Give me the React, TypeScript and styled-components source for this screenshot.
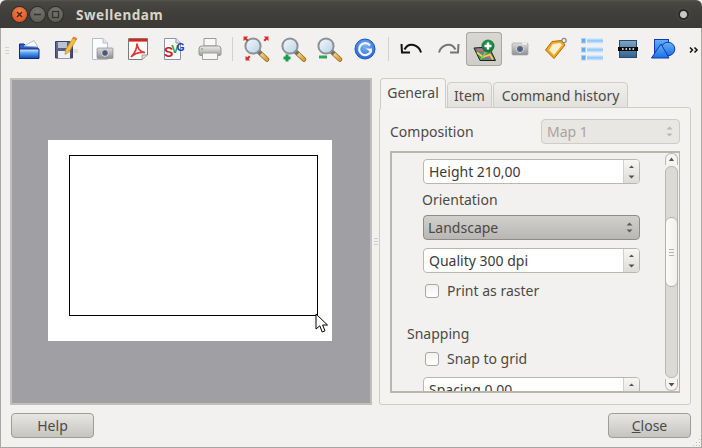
import React from 'react';
import styled, { createGlobalStyle } from 'styled-components';

const GlobalStyle = createGlobalStyle`
  html, body {
    margin: 0;
    padding: 0;
    background: #3c3b37;
  }
  * {
    box-sizing: border-box;
  }
`;

const Window = styled.div`
  position: relative;
  display: flex;
  flex-direction: column;
  width: 702px;
  height: 448px;
  overflow: hidden;
  background: #f2f1ef;
  font-family: 'Noto Sans', sans-serif;
  font-size: 14px;
  color: #4c4a46;
`;

const TitleBar = styled.div`
  display: flex;
  align-items: center;
  flex: none;
  height: 28px;
  padding: 1px 12px 0 12px;
  background: linear-gradient(#565550 0, #484743 2px, #3f3e3a 14px, #3c3b37 100%);
  border-radius: 6px 6px 0 0;
`;

const WindowButton = styled.div<{ $color: string; $dark: string }>`
  display: flex;
  align-items: center;
  justify-content: center;
  width: 15px;
  height: 15px;
  margin-right: 3px;
  border-radius: 50%;
  background: radial-gradient(circle at 50% 30%, ${(p) => p.$color}, ${(p) => p.$dark});
  box-shadow: 0 0 0 1px #2e2d2a;
`;

const TitleText = styled.div`
  margin-left: 10px;
  font-family: 'Noto Sans', sans-serif;
  font-weight: 700;
  font-size: 13.5px;
  letter-spacing: 0.55px;
  color: #d9d4c9;
`;

const TrayDot = styled.div`
  width: 13px;
  height: 13px;
  margin-left: auto;
  border-radius: 50%;
  background: radial-gradient(circle, #c9c8c4 0, #c9c8c4 3px, #2b2a27 4px, #2b2a27 5px, #55544f 6.5px);
`;

const Body = styled.div`
  display: flex;
  flex-direction: column;
  flex: 1;
  min-height: 0;
  border: 1px solid #a9a7a3;
  border-top: none;
`;

const Toolbar = styled.div`
  display: flex;
  align-items: flex-start;
  flex: none;
  height: 50px;
  padding-top: 4px;
`;

const Grip = styled.div`
  flex: none;
  width: 4px;
  height: 7px;
  margin: 15px 0 0 4px;
  background: repeating-linear-gradient(#d4d2cd 0, #d4d2cd 1px, transparent 1px, transparent 3px);
`;

const ToolSlot = styled.div`
  display: flex;
  flex: none;
  width: 36px;
  height: 34px;
`;

const ToggledSlot = styled(ToolSlot)`
  background: linear-gradient(#d9d7d3, #cfcdc9);
  border-radius: 4px;
  box-shadow: inset 0 0 0 1px #a9a7a2;
`;

const ToolSep = styled.div<{ $width: number }>`
  flex: none;
  width: ${(p) => p.$width}px;
  height: 24px;
  margin-top: 5px;
  display: flex;
  justify-content: center;
  &::before {
    content: '';
    width: 1px;
    background: #d3d1cc;
  }
`;

const More = styled.div`
  flex: none;
  width: 19px;
  height: 34px;
`;

const HiddenDefs = styled.svg`
  position: absolute;
`;

const Main = styled.div`
  display: flex;
  flex: 1;
  min-height: 0;
  padding: 0 10px 0 9px;
`;

const Canvas = styled.div`
  flex: none;
  width: 362px;
  height: 327px;
  padding: 60px 0 0 36px;
  background: #a09fa3;
  border: 2px solid #c2bfb8;
`;

const Sheet = styled.div`
  position: relative;
  width: 284px;
  height: 201px;
  padding: 15px 21px;
  background: #fff;
`;

const MapFrame = styled.div`
  width: 249px;
  height: 161px;
  border: 1px solid #000;
`;

const CursorIcon = styled.svg`
  position: absolute;
  left: 267px;
  top: 173px;
`;

const Splitter = styled.div`
  flex: none;
  width: 7px;
  display: flex;
  align-items: flex-start;
  justify-content: center;
  padding-top: 160px;
  &::before {
    content: '';
    width: 4px;
    height: 8px;
    background: repeating-linear-gradient(#cfccc7 0, #cfccc7 1px, transparent 1px, transparent 3px);
  }
`;

const RightPane = styled.div`
  display: flex;
  flex-direction: column;
  flex: none;
  width: 312px;
  height: 327px;
`;

const TabBar = styled.div`
  position: relative;
  z-index: 1;
  display: flex;
  align-items: flex-end;
  height: 30px;
  padding-left: 1px;
  margin-bottom: -1px;
`;

const Tab = styled.div<{ $active?: boolean; $width: number }>`
  display: flex;
  align-items: center;
  justify-content: center;
  width: ${(p) => p.$width}px;
  height: ${(p) => (p.$active ? 30 : 26)}px;
  padding: ${(p) => (p.$active ? '0 0 2px' : '0')};
  margin-right: 1px;
  border: 1px solid #cfccc6;
  border-bottom: ${(p) => (p.$active ? 'none' : '1px solid #cfccc6')};
  border-radius: 4px 4px 0 0;
  background: ${(p) => (p.$active ? '#f5f4f2' : 'linear-gradient(#f0efed, #e3e1dd)')};
  color: #4c4a46;
`;

const TabPanel = styled.div`
  display: flex;
  flex-direction: column;
  flex: 1;
  min-height: 0;
  padding: 11px 10px 11px 10px;
  background: #f4f3f1;
  border: 1px solid #cfccc6;
  border-radius: 3px;
`;

const CompositionRow = styled.div`
  display: flex;
  align-items: center;
  justify-content: space-between;
  flex: none;
  height: 25px;
  margin-bottom: 7px;
`;

const DisabledCombo = styled.div`
  display: flex;
  align-items: center;
  justify-content: space-between;
  width: 139px;
  height: 25px;
  padding: 0 6px 0 5px;
  background: #e9e7e4;
  border: 1px solid #cfccc7;
  border-radius: 4px;
  color: #a6a4a0;
`;

const ScrollArea = styled.div`
  display: flex;
  height: 242px;
  border: 2px solid #b9b6b0;
  background: #f2f1ef;
  border-right-width: 1px;
`;

const ScrollContent = styled.div`
  flex: 1;
  min-width: 0;
  overflow: hidden;
  padding-top: 6px;
`;

const Indented = styled.div<{ $top?: number; $left?: number }>`
  margin-top: ${(p) => p.$top ?? 0}px;
  margin-left: ${(p) => p.$left ?? 31}px;
`;

const SpinBox = styled.div`
  display: flex;
  width: 217px;
  height: 25px;
  background: #fff;
  border: 1px solid #bab7b1;
  border-radius: 4px;
  overflow: hidden;
  color: #3c3b38;
`;

const SpinValue = styled.div`
  flex: 1;
  padding: 1px 0 0 5px;
  line-height: 22px;
`;

const SpinArrows = styled.div`
  flex: none;
  width: 16px;
  background: linear-gradient(#f7f6f5, #dedcd8);
  border-left: 1px solid #d2cfca;
`;

const Combo = styled.div`
  display: flex;
  align-items: center;
  justify-content: space-between;
  width: 217px;
  height: 25px;
  padding: 0 6px 0 4px;
  background: linear-gradient(#d1d0cd, #b9b7b4);
  border: 1px solid #8e8c87;
  border-radius: 4px;
  color: #4a4945;
`;

const CheckRow = styled.div`
  display: flex;
  align-items: center;
  gap: 8px;
  height: 18px;
  padding-left: 2px;
`;

const CheckLabel = styled.span`
  margin-top: -2px;
`;

const CheckBox = styled.div`
  width: 14px;
  height: 14px;
  background: linear-gradient(#f2f1ef, #fff);
  border: 1px solid #aaa7a1;
  border-radius: 3px;
`;

const ScrollBar = styled.div`
  display: flex;
  flex-direction: column;
  align-items: center;
  flex: none;
  width: 16px;
`;

const ScrollStep = styled.div`
  flex: none;
  width: 13px;
  height: 12px;
  background: #f5f4f2;
  border: 1px solid #bcb9b3;
  display: flex;
  align-items: center;
  justify-content: center;
`;

const StepUp = styled(ScrollStep)`
  border-radius: 6px 6px 0 0;
  border-bottom: none;
`;

const StepDown = styled(ScrollStep)`
  border-radius: 0 0 6px 6px;
  border-top: none;
`;

const Trough = styled.div`
  flex: 1;
  width: 13px;
  padding-top: 50px;
  background: #dcdad6;
  border: 1px solid #bcb9b3;
  border-radius: 6px;
  margin: 1px 0;
`;

const Thumb = styled.div`
  display: flex;
  align-items: center;
  justify-content: center;
  width: 13px;
  height: 70px;
  margin-left: -1px;
  background: linear-gradient(90deg, #fbfbfa, #f0efed);
  border: 1px solid #b3b0aa;
  border-radius: 6px;
  &::before {
    content: '';
    width: 5px;
    height: 7px;
    background: repeating-linear-gradient(#b5b2ac 0, #b5b2ac 1px, transparent 1px, transparent 3px);
  }
`;

const Footer = styled.div`
  display: flex;
  justify-content: space-between;
  flex: none;
  height: 41px;
  padding: 7px 10px 0 10px;
`;

const PushButton = styled.div`
  display: flex;
  align-items: center;
  justify-content: center;
  width: 83px;
  height: 25px;
  background: linear-gradient(#e8e6e3, #c6c4c1);
  border: 1px solid #9f9d98;
  border-radius: 4px;
  color: #4c4a46;
`;

const ResizeGrip = styled.svg`
  position: absolute;
  right: 1px;
  bottom: 1px;
`;

const ArrowPair = ({ color = '#5e5c58' }: { color?: string }) => (
  <svg width="7" height="11" viewBox="0 0 7 11">
    <path d="M3.5 0.5L6.5 3.5H0.5Z" fill={color} />
    <path d="M3.5 10.5L6.5 7.5H0.5Z" fill={color} />
  </svg>
);

const SpinField = ({ text }: { text: string }) => (
  <SpinBox>
    <SpinValue>{text}</SpinValue>
    <SpinArrows>
      <svg width="15" height="23" viewBox="0 0 15 23">
        <path d="M7.5 5.5L10 8H5Z" fill="#55534f" />
        <path d="M7.5 18.5L10.5 15.5H4.5Z" fill="#55534f" />
      </svg>
    </SpinArrows>
  </SpinBox>
);

const Icons = () => (
  <HiddenDefs width="0" height="0">
    <defs>
      <linearGradient id="folderFront" x1="0" y1="0" x2="0" y2="1">
        <stop offset="0" stopColor="#e6f2fc" />
        <stop offset="0.4" stopColor="#56a5ea" />
        <stop offset="1" stopColor="#0f45b4" />
      </linearGradient>
      <linearGradient id="floppy" x1="0" y1="0" x2="1" y2="1">
        <stop offset="0" stopColor="#6a7196" />
        <stop offset="1" stopColor="#3f466e" />
      </linearGradient>
      <linearGradient id="greyBody" x1="0" y1="0" x2="0" y2="1">
        <stop offset="0" stopColor="#dcdcda" />
        <stop offset="1" stopColor="#8d8e8f" />
      </linearGradient>
      <linearGradient id="printerBody" x1="0" y1="0" x2="0" y2="1">
        <stop offset="0" stopColor="#eeeeed" />
        <stop offset="1" stopColor="#9c9d9c" />
      </linearGradient>
      <linearGradient id="lens" x1="0" y1="0" x2="1" y2="1">
        <stop offset="0" stopColor="#f6f9fc" />
        <stop offset="1" stopColor="#b9d0e6" />
      </linearGradient>
      <linearGradient id="handle" x1="0" y1="0" x2="1" y2="1">
        <stop offset="0" stopColor="#f7e6a8" />
        <stop offset="1" stopColor="#dc9a2c" />
      </linearGradient>
      <radialGradient id="refreshBall" cx="0.5" cy="0.35" r="0.7">
        <stop offset="0" stopColor="#7fb4f5" />
        <stop offset="1" stopColor="#1f5fd8" />
      </radialGradient>
      <linearGradient id="listBar" x1="0" y1="0" x2="0" y2="1">
        <stop offset="0" stopColor="#e4f1fd" />
        <stop offset="0.5" stopColor="#8cc6f8" />
        <stop offset="1" stopColor="#d6eafc" />
      </linearGradient>
      <linearGradient id="scaleFill" x1="0" y1="0" x2="0" y2="1">
        <stop offset="0" stopColor="#7fa6cb" />
        <stop offset="1" stopColor="#2f618f" />
      </linearGradient>
      <linearGradient id="shapeFill" x1="0" y1="0" x2="0" y2="1">
        <stop offset="0" stopColor="#69b0f7" />
        <stop offset="1" stopColor="#1c6fe6" />
      </linearGradient>
      <radialGradient id="addBall" cx="0.5" cy="0.35" r="0.7">
        <stop offset="0" stopColor="#33a05a" />
        <stop offset="1" stopColor="#0a6b33" />
      </radialGradient>
    </defs>
  </HiddenDefs>
);

const Tool = ({ children }: { children: React.ReactNode }) => (
  <ToolSlot>
    <svg width="36" height="34" viewBox="0 0 36 34">
      {children}
    </svg>
  </ToolSlot>
);

const Magnifier = ({ cx }: { cx: number }) => (
  <>
    <path d={`M${cx + 6} 20L${cx + 14} 27.5`} stroke="#8a6a2a" strokeWidth="4.6" strokeLinecap="round" />
    <path d={`M${cx + 6} 20L${cx + 14} 27.5`} stroke="url(#handle)" strokeWidth="3.2" strokeLinecap="round" />
    <path d={`M${cx + 5.5} 19.5L${cx + 8} 22`} stroke="#6e6e6c" strokeWidth="3.6" />
    <circle cx={cx} cy="14" r="7.6" fill="url(#lens)" stroke="#8b9296" strokeWidth="2" />
  </>
);

const CornerArrow = ({ x, y, r }: { x: number; y: number; r: number }) => (
  <g transform={`translate(${x} ${y}) rotate(${r})`}>
    <path d="M-2.5 -2.5H2L0.8 -0.8L2.6 1L1 2.6L-0.8 0.8L-2.5 2Z" fill="#d8322d" />
  </g>
);

const App = () => (
  <Window>
    <GlobalStyle />
    <Icons />
    <TitleBar>
      <WindowButton $color="#f4824a" $dark="#d8481a">
        <svg width="9" height="9" viewBox="0 0 9 9">
          <path d="M2 2L7 7M7 2L2 7" stroke="#4a2310" strokeWidth="1.4" />
        </svg>
      </WindowButton>
      <WindowButton $color="#767570" $dark="#585752">
        <svg width="9" height="9" viewBox="0 0 9 9">
          <path d="M1 4.5H8" stroke="#34332f" strokeWidth="1.6" />
        </svg>
      </WindowButton>
      <WindowButton $color="#767570" $dark="#585752">
        <svg width="9" height="9" viewBox="0 0 9 9">
          <rect x="1.5" y="1.5" width="6" height="6" fill="none" stroke="#34332f" strokeWidth="1.3" />
        </svg>
      </WindowButton>
      <TitleText>Swellendam</TitleText>
      <TrayDot />
    </TitleBar>
    <Body>
      <Toolbar>
        <Grip />
        <Tool>
          <path d="M10.5 14V26.5H29.5V17L27 14H17L15 12H10.5Z" fill="#2d63c8" stroke="#12238a" />
          <path d="M15 14L25 8.5L29 15Z" fill="#f8fbfe" stroke="#9fb2cc" strokeWidth="0.8" />
          <path d="M10.5 17H30V26.5H10.5Z" fill="url(#folderFront)" stroke="#12238a" />
        </Tool>
        <Tool>
          <path d="M28 17H33V21H28Z" fill="#e2e0dd" />
          <path d="M10.5 9.5H25L27.5 12V26H10.5Z" fill="url(#floppy)" stroke="#3a4066" />
          <rect x="13" y="10" width="9" height="6" fill="#bcc1d4" />
          <rect x="13" y="19" width="12" height="7" fill="#eeeef3" />
          <path d="M32 6.5L24 20L20 22.5L20.5 18L28.5 5Z" fill="#f4bd3c" stroke="#b88616" strokeWidth="0.6" />
          <path d="M28.5 5L32 6.5L31 8.2L27.5 6.6Z" fill="#e87c2b" />
        </Tool>
        <Tool>
          <path d="M11.5 6.5H22L26.5 11V27.5H11.5Z" fill="#fbfcfd" stroke="#b4bccd" />
          <path d="M22 6.5V11H26.5" fill="#e3e7ee" stroke="#b4bccd" />
          <rect x="16" y="16" width="16" height="10.5" rx="1" fill="url(#greyBody)" stroke="#8a8b8c" strokeWidth="0.7" />
          <circle cx="24" cy="21" r="3.4" fill="#4f5a72" stroke="#e4e4e3" />
          <circle cx="24" cy="21" r="1.2" fill="#2a5ea8" />
        </Tool>
        <Tool>
          <path d="M11.5 6.5H30.5V23L25 27.5H11.5Z" fill="#fdfdfc" stroke="#7d7a75" />
          <rect x="12" y="7" width="18" height="2.6" fill="#e0201c" />
          <path d="M25 27.5V23H30.5" fill="#dfdcd8" stroke="#8d8a85" strokeWidth="0.8" />
          <path d="M14 25C18 21 20 16 20 11.5C20 16 23 20 28 20.5C23 20 18 21 14 25Z" fill="none" stroke="#e3362f" strokeWidth="1.7" />
        </Tool>
        <Tool>
          <path d="M11.5 6.5H23L27.5 11V27.5H11.5Z" fill="#fcfdfe" stroke="#8b93a6" />
          <path d="M23 6.5V11H27.5" fill="#e1e5ec" stroke="#8b93a6" />
          <text
            x="11"
            y="25"
            fontFamily="Liberation Sans, sans-serif"
            fontWeight="700"
            letterSpacing="-2"
          >
            <tspan fill="#d01d1d" fontSize="14">S</tspan>
            <tspan fill="#17a52a" fontSize="11" dy="-4">V</tspan>
            <tspan fill="#1638c8" fontSize="10" dy="-2">G</tspan>
          </text>
        </Tool>
        <Tool>
          <path d="M15 6.5H27V14H15Z" fill="#f8f8f7" stroke="#9a9b9a" />
          <path d="M12.5 14H29.5Q32 14 32 17V22Q32 23.5 30 23.5H12Q10 23.5 10 22V17Q10 14 12.5 14Z" fill="url(#printerBody)" stroke="#949593" />
          <path d="M13.5 21H28.5V27.5H13.5Z" fill="#f6f6f5" stroke="#a0a19f" />
          <circle cx="13" cy="17" r="1" fill="#5bd04f" />
        </Tool>
        <ToolSep $width={14} />
        <Tool>
          <Magnifier cx={14} />
          <CornerArrow x={7} y={7} r={0} />
          <CornerArrow x={27} y={7} r={90} />
          <CornerArrow x={9} y={26} r={270} />
        </Tool>
        <Tool>
          <Magnifier cx={15} />
          <path d="M12 22.5V29.5M8.5 26H15.5" stroke="#14a048" strokeWidth="3" />
        </Tool>
        <Tool>
          <Magnifier cx={15} />
          <path d="M8 25H16" stroke="#2da657" strokeWidth="3" />
        </Tool>
        <Tool>
          <circle cx="18" cy="17" r="10" fill="url(#refreshBall)" stroke="#1b56c8" />
          <path d="M23 13.5A6 6 0 1 0 24 18.5" fill="none" stroke="#f2f7fe" strokeWidth="2.2" />
          <path d="M18.5 16.5H25V21Z" fill="#f2f7fe" />
        </Tool>
        <ToolSep $width={11} />
        <Tool>
          <path d="M27 20.5C25 13 15 9 10.5 17.5" fill="none" stroke="#111" strokeWidth="2" />
          <path d="M7.5 12L8 20.5H16" fill="none" stroke="#111" strokeWidth="2" />
        </Tool>
        <Tool>
          <path d="M9 20.5C11 13 21 9 25.5 17.5" fill="none" stroke="#767573" strokeWidth="2" />
          <path d="M28.5 12L28 20.5H20" fill="none" stroke="#767573" strokeWidth="2" />
        </Tool>
        <ToggledSlot>
          <svg width="36" height="34" viewBox="0 0 36 34">
            <path d="M8 16L23 15L29.5 28.5H14Z" fill="#5f8a70" stroke="#1c211b" />
            <path d="M11 17.5L19 18.5L18.5 23L26.5 26.5" fill="none" stroke="#e8559c" strokeWidth="2" />
            <path d="M11 20.5L17 25L24 22.5L27 27.5" fill="none" stroke="#e8dc3a" strokeWidth="1.6" />
            <path d="M15 27L19 21L24 18.5" fill="none" stroke="#6ad05a" strokeWidth="1.4" />
            <circle cx="22" cy="14" r="6.5" fill="url(#addBall)" />
            <path d="M22 10.5V17.5M18.5 14H25.5" stroke="#fff" strokeWidth="2.4" />
          </svg>
        </ToggledSlot>
        <Tool>
          <rect x="10" y="11" width="16" height="12" rx="1" fill="url(#greyBody)" stroke="#a4a5a6" strokeWidth="0.7" />
          <rect x="20" y="10.5" width="5" height="2" fill="#f0f0f0" />
          <circle cx="18" cy="17" r="3.6" fill="#5d6478" stroke="#d8d8d7" />
          <circle cx="18" cy="17" r="1.4" fill="#2a64b0" />
        </Tool>
        <Tool>
          <path d="M7.5 18L16 26.5L27 13L23.5 8.5L14 9.5Z" fill="#f4a81c" stroke="#a9690c" strokeLinejoin="round" />
          <path d="M11 18L16 23L24 13L22 11L15 12Z" fill="#fdf0d2" />
          <circle cx="26" cy="8.5" r="2.2" fill="none" stroke="#8a8984" strokeWidth="1.2" />
        </Tool>
        <Tool>
          {[6, 15, 23].map((y) => (
            <g key={y}>
              <rect x="7.5" y={y + 0.5} width="4" height="4.5" fill="#6aa8ea" stroke="#a9cff2" />
              <rect x="13" y={y} width="16" height="5.5" rx="1" fill="url(#listBar)" />
            </g>
          ))}
        </Tool>
        <Tool>
          <rect x="9.5" y="8.5" width="17" height="17" fill="url(#scaleFill)" stroke="#274a6b" />
          <rect x="8" y="15" width="20" height="4" fill="#0c0c0c" />
          {[12, 15.5, 19, 22.5].map((x) => (
            <rect key={x} x={x} y="16.2" width="1.6" height="1.6" fill="#f4f4f4" />
          ))}
        </Tool>
        <Tool>
          <rect x="8.5" y="7.5" width="14" height="15" fill="url(#shapeFill)" stroke="#0b3cb4" />
          <circle cx="22" cy="17" r="6.8" fill="url(#shapeFill)" stroke="#0b3cb4" />
          <path d="M18 12L26 26H8.5Z" fill="url(#shapeFill)" stroke="#0b3cb4" transform="translate(-3 0)" />
        </Tool>
        <More>
          <svg width="19" height="34" viewBox="0 0 19 34">
            <path d="M8 15.5L10.5 18L8 20.5M12.5 15.5L15 18L12.5 20.5" fill="none" stroke="#111" strokeWidth="1.5" />
          </svg>
        </More>
      </Toolbar>
      <Main>
        <Canvas>
          <Sheet>
            <MapFrame />
            <CursorIcon width="14" height="21" viewBox="0 0 14 21">
              <path d="M1 1V16L4.8 12.8L7.2 19L10 17.8L7.6 12H12.5Z" fill="#fff" stroke="#000" />
            </CursorIcon>
          </Sheet>
        </Canvas>
        <Splitter />
        <RightPane>
          <TabBar>
            <Tab $active $width={66}>General</Tab>
            <Tab $width={45}>Item</Tab>
            <Tab $width={135}>Command history</Tab>
          </TabBar>
          <TabPanel>
            <CompositionRow>
              <span>Composition</span>
              <DisabledCombo>
                Map 1
                <ArrowPair color="#b9b7b3" />
              </DisabledCombo>
            </CompositionRow>
            <ScrollArea>
              <ScrollContent>
                <Indented>
                  <SpinField text="Height 210,00" />
                </Indented>
                <Indented $top={6} $left={30}>Orientation</Indented>
                <Indented $top={6}>
                  <Combo>
                    Landscape
                    <ArrowPair />
                  </Combo>
                </Indented>
                <Indented $top={8}>
                  <SpinField text="Quality 300 dpi" />
                </Indented>
                <Indented $top={9}>
                  <CheckRow>
                    <CheckBox />
                    <CheckLabel>Print as raster</CheckLabel>
                  </CheckRow>
                </Indented>
                <Indented $top={24} $left={15}>Snapping</Indented>
                <Indented $top={7}>
                  <CheckRow>
                    <CheckBox />
                    <CheckLabel>Snap to grid</CheckLabel>
                  </CheckRow>
                </Indented>
                <Indented $top={9}>
                  <SpinField text="Spacing 0,00" />
                </Indented>
              </ScrollContent>
              <ScrollBar>
                <StepUp>
                  <svg width="7" height="5" viewBox="0 0 7 5">
                    <path d="M3.5 0.5L6 4H1Z" fill="#55534f" />
                  </svg>
                </StepUp>
                <Trough>
                  <Thumb />
                </Trough>
                <StepDown>
                  <svg width="7" height="5" viewBox="0 0 7 5">
                    <path d="M3.5 4.5L6.5 1H0.5Z" fill="#55534f" />
                  </svg>
                </StepDown>
              </ScrollBar>
            </ScrollArea>
          </TabPanel>
        </RightPane>
      </Main>
      <Footer>
        <PushButton>Help</PushButton>
        <PushButton>
          <span>
            <u>C</u>lose
          </span>
        </PushButton>
      </Footer>
    </Body>
    <ResizeGrip width="9" height="9" viewBox="0 0 9 9">
      {[[7, 1], [7, 4], [4, 4], [7, 7], [4, 7], [1, 7]].map(([x, y]) => (
        <rect key={`${x}-${y}`} x={x} y={y} width="1" height="1" fill="#c4c1bb" />
      ))}
    </ResizeGrip>
  </Window>
);

export default App;
